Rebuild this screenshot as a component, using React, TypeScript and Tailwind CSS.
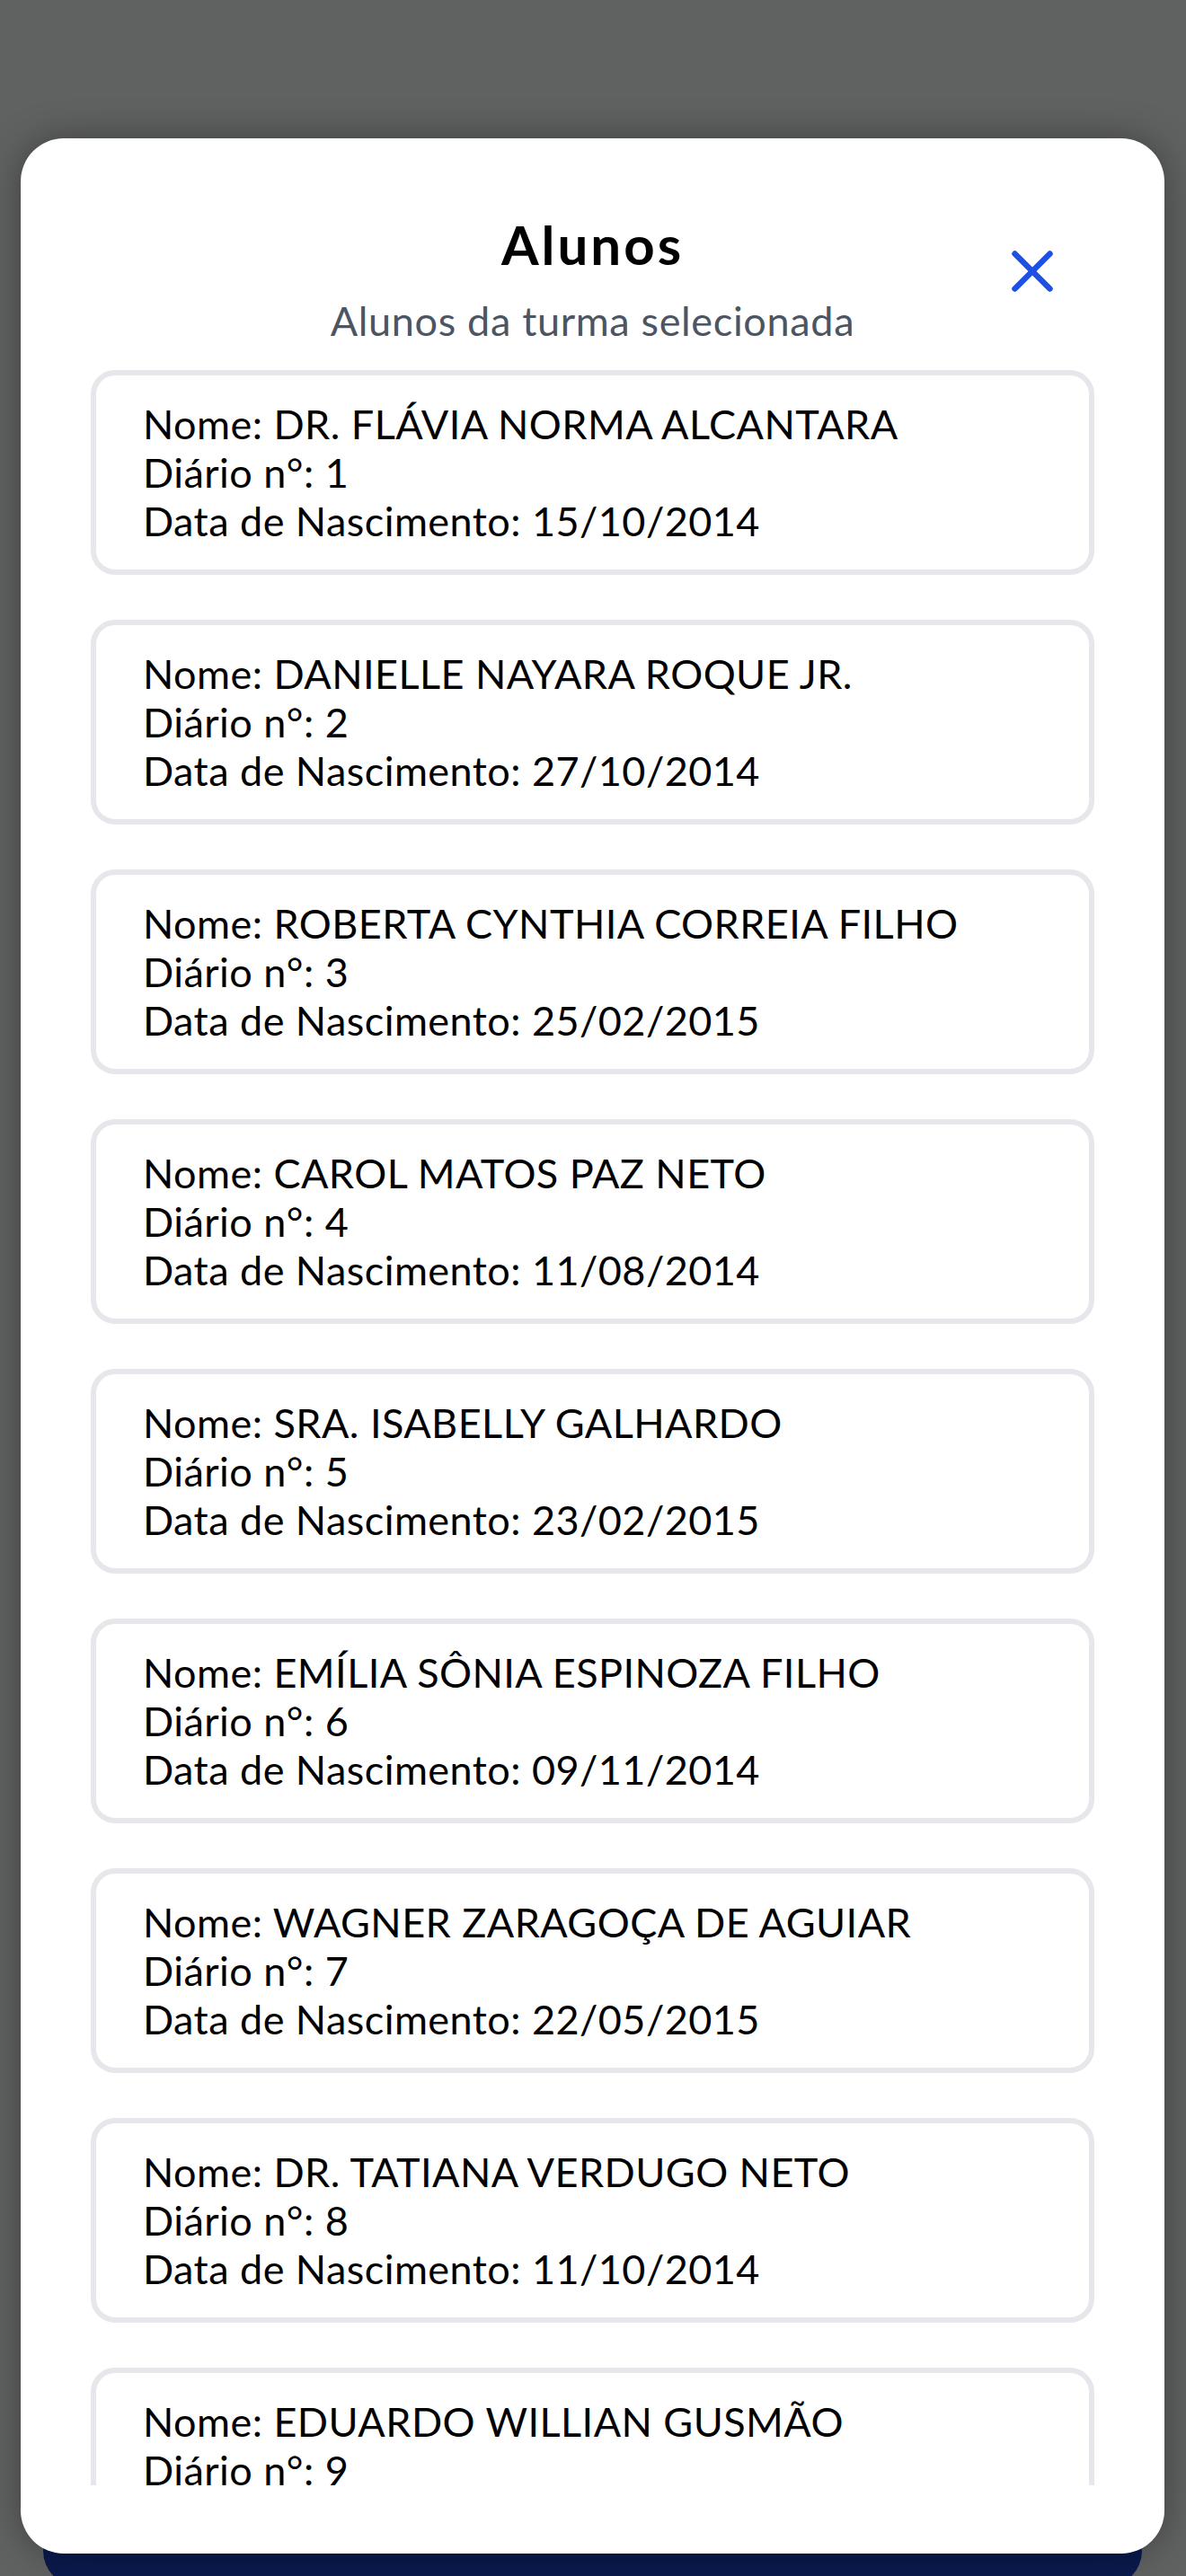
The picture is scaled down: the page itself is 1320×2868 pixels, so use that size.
import { X } from 'lucide-react'

type Aluno = {
  nome: string
  diario: number
  nascimento: string
}

const alunos: Aluno[] = [
  { nome: 'DR. FLÁVIA NORMA ALCANTARA', diario: 1, nascimento: '15/10/2014' },
  { nome: 'DANIELLE NAYARA ROQUE JR.', diario: 2, nascimento: '27/10/2014' },
  { nome: 'ROBERTA CYNTHIA CORREIA FILHO', diario: 3, nascimento: '25/02/2015' },
  { nome: 'CAROL MATOS PAZ NETO', diario: 4, nascimento: '11/08/2014' },
  { nome: 'SRA. ISABELLY GALHARDO', diario: 5, nascimento: '23/02/2015' },
  { nome: 'EMÍLIA SÔNIA ESPINOZA FILHO', diario: 6, nascimento: '09/11/2014' },
  { nome: 'WAGNER ZARAGOÇA DE AGUIAR', diario: 7, nascimento: '22/05/2015' },
  { nome: 'DR. TATIANA VERDUGO NETO', diario: 8, nascimento: '11/10/2014' },
  { nome: 'EDUARDO WILLIAN GUSMÃO', diario: 9, nascimento: '03/04/2015' },
]

function AlunoCard({ aluno }: { aluno: Aluno }) {
  return (
    <div className="shrink-0 rounded-[27px] border-[6px] border-[#e5e7eb] bg-white py-[27px] pl-[52px] pr-[40px] text-[45px] leading-[54px] tracking-[0.45px] text-black">
      <p>Nome: {aluno.nome}</p>
      <p>Diário n°: {aluno.diario}</p>
      <p>Data de Nascimento: {aluno.nascimento}</p>
    </div>
  )
}

export default function App() {
  return (
    <div className="relative h-[2868px] w-[1320px] overflow-hidden bg-[#606261] font-['Lato',sans-serif]">
      {/* botão da tela de trás, coberto pelo overlay */}
      <div className="absolute left-[48px] top-[2800px] h-[80px] w-[1223px] rounded-[40px] bg-[#0a1a4d]" />

      <div className="absolute bottom-[25px] left-[23px] right-[24px] top-[154px] flex flex-col rounded-[48px] bg-white pb-[76px] shadow-[0_0_40px_rgba(0,0,0,0.35)]">
        <div className="relative flex flex-col items-center pt-[82px]">
          <h2 className="text-[60px] font-bold leading-[72px] tracking-[3px] text-black">Alunos</h2>
          <p className="mt-[22px] text-[45px] leading-[54px] tracking-[0.65px] text-[#4b5563]">Alunos da turma selecionada</p>
          <button className="absolute right-[108px] top-[109px] text-[#1e50e6]" aria-label="Fechar">
            <X size={78} strokeWidth={2} />
          </button>
        </div>

        <div className="mt-[28px] flex min-h-0 flex-1 flex-col gap-[50px] overflow-hidden px-[78px]">
          {alunos.map((aluno) => (
            <AlunoCard key={aluno.diario} aluno={aluno} />
          ))}
        </div>
      </div>
    </div>
  )
}
